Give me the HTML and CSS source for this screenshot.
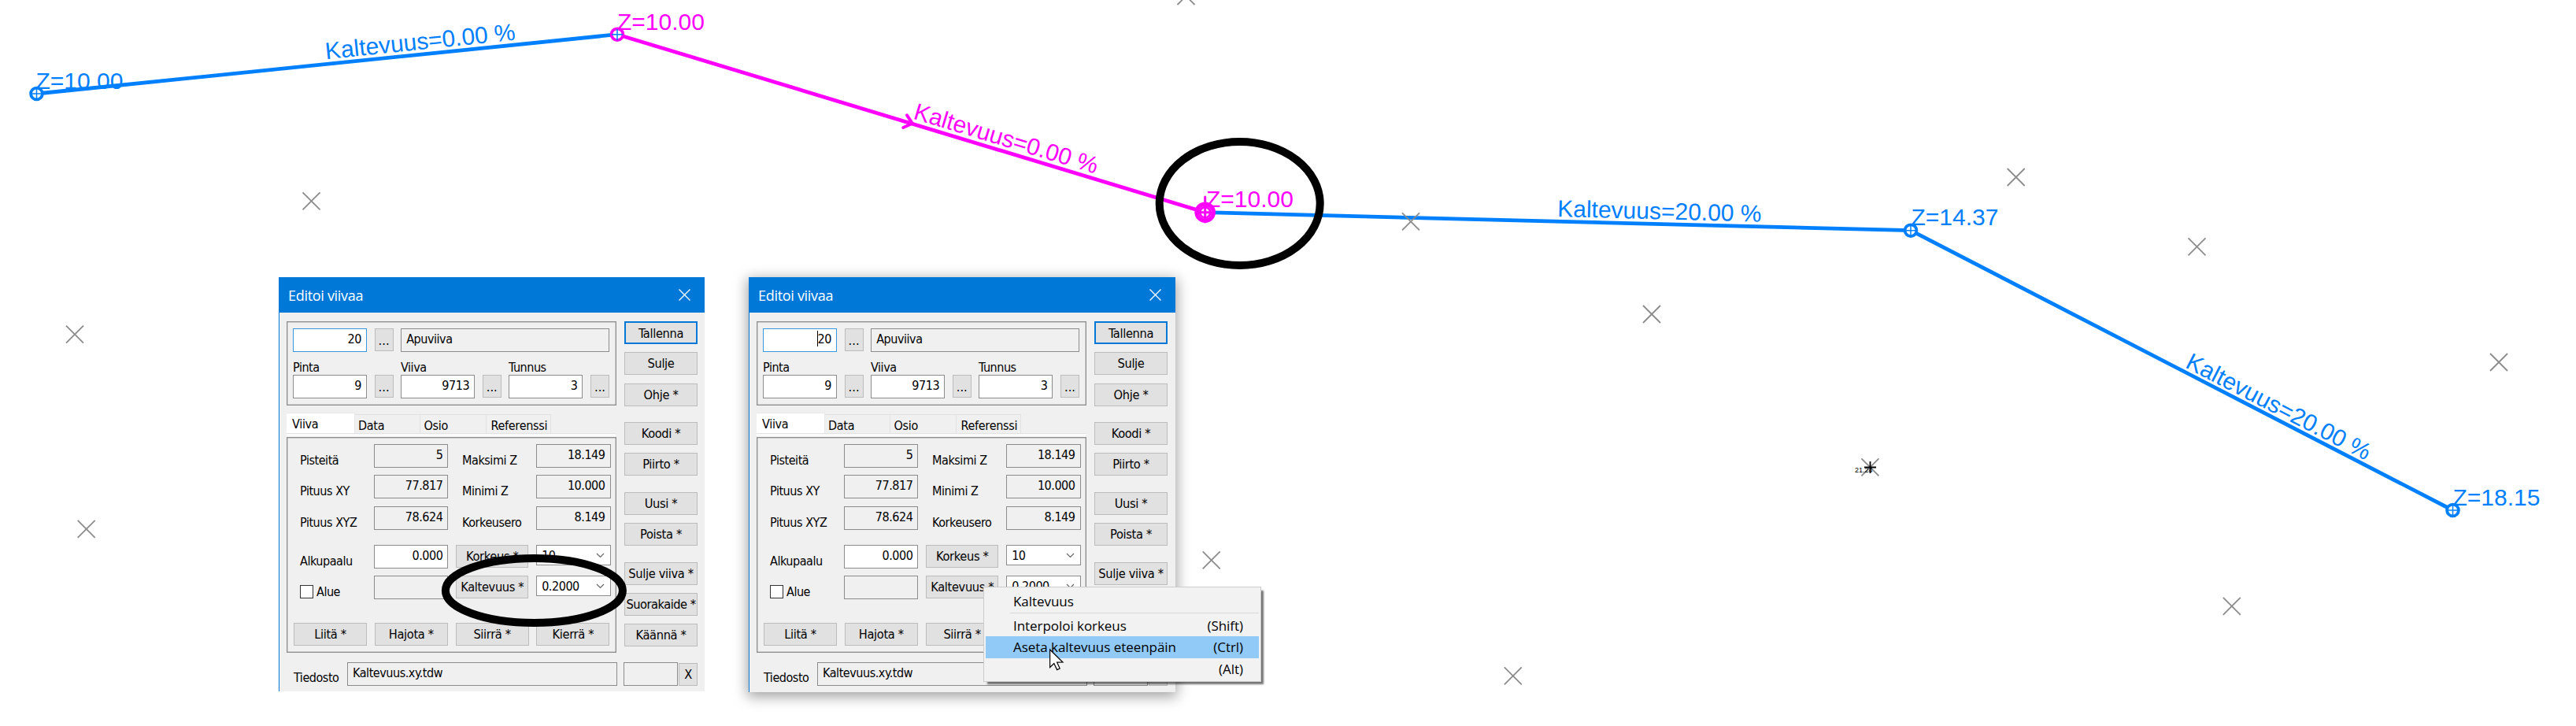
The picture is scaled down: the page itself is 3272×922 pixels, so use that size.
FILE: index.html
```html
<!DOCTYPE html>
<html lang="fi">
<head>
<meta charset="utf-8">
<title>Editoi viivaa</title>
<link rel="stylesheet" href="styles.css">
</head>
<body>
<main class="canvas">
  <svg class="drawing" width="3272" height="922" viewBox="0 0 3272 922">
    <defs>
      <path id="mark" d="M-11 -11L11 11M-11 11L11 -11"/>
    </defs>
    <g class="marks">
      <use href="#mark" x="395.5" y="255.3"/>
      <use href="#mark" x="95" y="424.7"/>
      <use href="#mark" x="109.7" y="671.8"/>
      <use href="#mark" x="1506.5" y="-5"/>
      <use href="#mark" x="1538.7" y="711.3"/>
      <use href="#mark" x="1921.8" y="858.3"/>
      <use href="#mark" x="2098" y="399"/>
      <use href="#mark" x="2560.7" y="225"/>
      <use href="#mark" x="2375.4" y="593.3"/>
      <use href="#mark" x="2790.5" y="313.3"/>
      <use href="#mark" x="3174" y="460"/>
      <use href="#mark" x="2834.8" y="769.8"/>
    </g>
    <text class="tiny" x="2356" y="600">21.24</text>
    <path class="cross" d="M2368 593.5H2383M2375.5 586V601"/>
    <path class="line" d="M46.5 119L784 43.7M1530.7 269.7L2427 292.7L3115.5 648"/>
    <use class="mark" href="#mark" x="1792" y="281.3"/>
    <path class="line selected" d="M784 43.7L1530.7 269.7"/>
    <path class="arrow" d="M1152 146.3L1158.8 156.7L1147.3 162"/>
    <g class="node">
      <circle cx="46.5" cy="119" r="7.4"/>
      <circle cx="2427" cy="292.7" r="7.4"/>
      <circle cx="3115.5" cy="648" r="7.4"/>
      <circle class="picked" cx="784" cy="43.7" r="7.4"/>
    </g>
    <path class="hair" d="M39 119H54M46.5 112V126M777 43.7H791M784 37V51M2420 292.7H2434M2427 286V300M3109 648H3122M3115.5 641V655"/>
    <circle class="active" cx="1530.7" cy="269.7" r="10.6"/>
    <circle class="active inner" cx="1530.7" cy="269.7" r="6.6"/>
    <path class="active hairs" d="M1530.7 250V282M1519 269.7H1542"/>
    <g class="label">
      <text x="45.5" y="113.3">Z=10.00</text>
      <text x="2427.5" y="286">Z=14.37</text>
      <text x="3115.5" y="642">Z=18.15</text>
      <text transform="translate(414 75.2) rotate(-5.83)">Kaltevuus=0.00 %</text>
      <text transform="translate(1978 275) rotate(1.47)">Kaltevuus=20.00 %</text>
      <text transform="translate(2774.5 466) rotate(27.3)">Kaltevuus=20.00 %</text>
    </g>
    <g class="label picked">
      <text x="784" y="37.7">Z=10.00</text>
      <text x="1532" y="262.7">Z=10.00</text>
      <text transform="translate(1159 150.5) rotate(16.84)">Kaltevuus=0.00 %</text>
    </g>
    <ellipse class="ring" cx="1574.7" cy="258.5" rx="102" ry="78.5"/>
  </svg>

  <section class="dialog first">
    <header class="titlebar"><span>Editoi viivaa</span><svg width="15" height="15" viewBox="0 0 15 15"><path d="M.5 .5L14.5 14.5M14.5 .5L.5 14.5"/></svg></header>
    <div class="content">
      <div class="left">
        <div class="group head">
          <div class="headgrid">
            <span class="field edit focus">20</span><span class="btn dots">...</span><span class="field wide">Apuviiva</span>
          </div>
          <div class="caps"><span>Pinta</span><span>Viiva</span><span>Tunnus</span></div>
          <div class="headgrid">
            <span class="field edit">9</span><span class="btn dots">...</span><span class="field edit">9713</span><span class="btn dots">...</span><span class="field edit">3</span><span class="btn dots">...</span>
          </div>
        </div>
        <div class="tabs"><span class="on">Viiva</span><span>Data</span><span>Osio</span><span>Referenssi</span></div>
        <div class="group panel">
          <div class="row"><span class="lab">Pisteitä</span><span class="field num">5</span><span class="lab">Maksimi Z</span><span class="field num">18.149</span></div>
          <div class="row"><span class="lab">Pituus XY</span><span class="field num">77.817</span><span class="lab">Minimi Z</span><span class="field num">10.000</span></div>
          <div class="row"><span class="lab">Pituus XYZ</span><span class="field num">78.624</span><span class="lab">Korkeusero</span><span class="field num">8.149</span></div>
          <div class="row gap"><span class="lab">Alkupaalu</span><span class="field edit">0.000</span><span class="btn">Korkeus *</span><span class="field combo">10<svg width="11" height="7" viewBox="0 0 11 7"><path d="M1 1L5.5 5.5L10 1"/></svg></span></div>
          <div class="row"><span class="lab check"><i></i>Alue</span><span class="field"></span><span class="btn">Kaltevuus *</span><span class="field combo">0.2000<svg width="11" height="7" viewBox="0 0 11 7"><path d="M1 1L5.5 5.5L10 1"/></svg></span></div>
          <div class="actions"><span class="btn">Liitä *</span><span class="btn">Hajota *</span><span class="btn">Siirrä *</span><span class="btn">Kierrä *</span></div>
        </div>
      </div>
      <div class="side">
        <span class="btn default">Tallenna</span><span class="btn">Sulje</span><span class="btn">Ohje *</span>
        <span class="btn apart">Koodi *</span><span class="btn">Piirto *</span>
        <span class="btn apart">Uusi *</span><span class="btn">Poista *</span>
        <span class="btn apart">Sulje viiva *</span><span class="btn tight">Suorakaide *</span><span class="btn">Käännä *</span>
      </div>
    </div>
    <footer class="file"><span class="lab">Tiedosto</span><span class="field path">Kaltevuus.xy.tdw</span><span class="field short"></span><span class="btn">X</span></footer>
  </section>

  <section class="dialog second">
    <header class="titlebar"><span>Editoi viivaa</span><svg width="15" height="15" viewBox="0 0 15 15"><path d="M.5 .5L14.5 14.5M14.5 .5L.5 14.5"/></svg></header>
    <div class="content">
      <div class="left">
        <div class="group head">
          <div class="headgrid">
            <span class="field edit focus"><b class="caret"></b>20</span><span class="btn dots">...</span><span class="field wide">Apuviiva</span>
          </div>
          <div class="caps"><span>Pinta</span><span>Viiva</span><span>Tunnus</span></div>
          <div class="headgrid">
            <span class="field edit">9</span><span class="btn dots">...</span><span class="field edit">9713</span><span class="btn dots">...</span><span class="field edit">3</span><span class="btn dots">...</span>
          </div>
        </div>
        <div class="tabs"><span class="on">Viiva</span><span>Data</span><span>Osio</span><span>Referenssi</span></div>
        <div class="group panel">
          <div class="row"><span class="lab">Pisteitä</span><span class="field num">5</span><span class="lab">Maksimi Z</span><span class="field num">18.149</span></div>
          <div class="row"><span class="lab">Pituus XY</span><span class="field num">77.817</span><span class="lab">Minimi Z</span><span class="field num">10.000</span></div>
          <div class="row"><span class="lab">Pituus XYZ</span><span class="field num">78.624</span><span class="lab">Korkeusero</span><span class="field num">8.149</span></div>
          <div class="row gap"><span class="lab">Alkupaalu</span><span class="field edit">0.000</span><span class="btn">Korkeus *</span><span class="field combo">10<svg width="11" height="7" viewBox="0 0 11 7"><path d="M1 1L5.5 5.5L10 1"/></svg></span></div>
          <div class="row"><span class="lab check"><i></i>Alue</span><span class="field"></span><span class="btn">Kaltevuus *</span><span class="field combo">0.2000<svg width="11" height="7" viewBox="0 0 11 7"><path d="M1 1L5.5 5.5L10 1"/></svg></span></div>
          <div class="actions"><span class="btn">Liitä *</span><span class="btn">Hajota *</span><span class="btn">Siirrä *</span><span class="btn"></span></div>
        </div>
      </div>
      <div class="side">
        <span class="btn default">Tallenna</span><span class="btn">Sulje</span><span class="btn">Ohje *</span>
        <span class="btn apart">Koodi *</span><span class="btn">Piirto *</span>
        <span class="btn apart">Uusi *</span><span class="btn">Poista *</span>
        <span class="btn apart">Sulje viiva *</span><span class="btn"></span><span class="btn"></span>
      </div>
    </div>
    <footer class="file"><span class="lab">Tiedosto</span><span class="field path">Kaltevuus.xy.tdw</span><span class="field short"></span><span class="btn"></span></footer>
  </section>

  <nav class="menu">
    <div class="item">Kaltevuus</div>
    <hr>
    <div class="item"><span>Interpoloi korkeus</span><span>(Shift)</span></div>
    <div class="item hot"><span>Aseta kaltevuus eteenpäin</span><span>(Ctrl)</span></div>
    <div class="item"><span></span><span>(Alt)</span></div>
  </nav>

  <svg class="overlay" width="3272" height="922" viewBox="0 0 3272 922">
    <ellipse class="ring" cx="678.4" cy="750" rx="112.5" ry="41"/>
    <path class="cursor" d="M1333.6 825V847.5L1338.8 842.6L1342.6 850.6L1346.2 849L1342.6 841.2L1350 841Z"/>
  </svg>
</main>
</body>
</html>
```
FILE: styles.css
```css
* { box-sizing: border-box; }
body { margin: 0; background: #fff; overflow: hidden; }
.canvas { position: relative; width: 3272px; height: 922px; background: #fff; overflow: hidden; }
.drawing, .overlay { position: absolute; left: 0; top: 0; }

.marks, .mark { stroke: #8c8c8c; stroke-width: 1.8; fill: none; }
.cross { stroke: #000; stroke-width: 1.8; }
.tiny { font: 9px "Liberation Sans", Arial, sans-serif; fill: #000; }
.line { fill: none; stroke: #0080ff; stroke-width: 4.8; }
.line.selected { stroke: #f0f; }
.arrow { fill: none; stroke: #f0f; stroke-width: 4; stroke-linecap: round; }
.node circle { fill: #fff; stroke: #0080ff; stroke-width: 3.8; }
.node .picked { stroke: #f0f; }
.hair { stroke: #0080ff; stroke-width: 1.5; }
.active { fill: #fff; stroke: #f0f; stroke-width: 5.4; }
.active.inner { stroke-width: 2.8; }
.active.hairs { stroke-width: 3; stroke-linecap: round; }
.label { font: 30px "Liberation Sans", Arial, sans-serif; fill: #0080ff; }
.label.picked { fill: #f0f; }
.ring { fill: none; stroke: #000; stroke-width: 10; }
.cursor { fill: #fff; stroke: #000; stroke-width: 1.2; }

.dialog {
  position: absolute; top: 352px; display: flex; flex-direction: column;
  background: #f0f0f0; border-left: 1px solid #0078d7; color: #000;
  font: 16px/20px "DejaVu Sans Condensed", "DejaVu Sans", sans-serif; font-stretch: condensed; letter-spacing: -0.45px;
}
.first { left: 354px; width: 541px; height: 526px; }
.second { left: 951px; width: 542px; height: 527px; box-shadow: 0 4px 16px 2px rgba(0, 0, 0, .36); }
.titlebar {
  display: flex; justify-content: space-between; align-items: center; height: 45px; flex: none;
  padding: 0 18px 0 11px; background: #0078d7; color: #fff; letter-spacing: -0.3px;
  font: 18px/24px "Open Sans", "Noto Sans", sans-serif;
}
.titlebar span { padding-top: 1px; }
.titlebar svg path { stroke: #fff; stroke-width: 1.3; }
.content { display: flex; gap: 10px; padding: 11px 0 0 9px; height: 433px; flex: none; }
.left { width: 419px; }
.group { border: 1px solid #8f8f8f; box-shadow: inset 0 0 0 .5px #a8a8a8; }
.head { height: 107px; padding: 8px 7px 0; }
.headgrid { display: grid; grid-template-columns: 94px 24px 94px 24px 94px 24px; column-gap: 9.6px; }
.wide { grid-column: 3 / span 4; }
.caps { display: grid; grid-template-columns: 137px 137px 1fr; height: 29px; padding-top: 10px; line-height: 20px; }
.field { display: block; height: 30px; border: 1px solid #8c8c8c; background: #f0f0f0; padding: 3px 6px 0; line-height: 20px; white-space: nowrap; }
.edit, .num { text-align: right; }
.edit, .combo { background: #fff; }
.focus { border-color: #3a96dd; position: relative; }
.caret { position: absolute; right: 23px; top: 2px; width: 1px; height: 20px; background: #000; }
.btn { display: block; height: 29px; border: 1.5px solid #bcbcbc; background: #e1e1e1; text-align: center; line-height: 27px; white-space: nowrap; overflow: hidden; font-size: 16.3px; letter-spacing: -0.35px; }
.dots { line-height: 29px; letter-spacing: 0; }
.tight { letter-spacing: -0.5px; }
.default { border: 2px solid #0078d7; }
.tabs { display: flex; align-items: flex-end; height: 40px; padding-bottom: 4px; margin-right: 1px; position: relative; }
.tabs::after { content: ""; position: absolute; left: 0; right: 0; bottom: 1px; height: 3px; background: #fbfbfb; border-top: 1px solid #e2e2e2; }
.tabs span { height: 25px; border: 1px solid #e2e2e2; border-left: 0; padding: 4px 0 0 4px; width: 82.5px; line-height: 20px; letter-spacing: -0.3px; }
.tabs .on { height: 27px; width: 87px; padding-left: 7px; background: #fff; border-color: #e8e8e8; }
.tabs span:nth-child(3) { width: 84px; padding-left: 5px; }
.tabs span:nth-child(4) { padding-left: 6px; }
.panel { height: 274px; padding: 8px 7px 0 8px; }
.row { display: grid; column-gap: 9.7px; grid-template-columns: 92.3px 94.4px 92.4px 94.4px; height: 30px; margin-bottom: 9.3px; }
.row.gap { margin-top: 19px; }
.row .lab { padding: 11px 0 0 8px; white-space: nowrap; }
.row .combo { height: 26px; display: flex; justify-content: space-between; padding-right: 7px; }
.combo svg { margin-top: 6px; }
.combo path { fill: none; stroke: #666; stroke-width: 1.2; }
.check { display: flex; gap: 4px; }
.check i { width: 17px; height: 17px; margin-top: 1px; border: 1.5px solid #333; background: #fff; }
.actions { display: grid; grid-template-columns: repeat(4, 93px); column-gap: 9.8px; margin-top: 30px; }
.side { width: 93px; display: flex; flex-direction: column; gap: 10.3px; }
.side .btn { flex: none; }
.side .apart { margin-top: 10.2px; }
.file { display: flex; align-items: flex-start; padding-left: 18px; margin-top: 11px; }
.file .lab { width: 68px; padding-top: 10px; }
.file .path { width: 343px; margin-right: 8px; }
.file .short { width: 69px; margin-right: 1px; }
.file .btn { width: 24px; margin-top: 1px; }

.menu {
  position: absolute; left: 1249px; top: 745px; width: 353px; height: 121px; padding: 4px 2px 0;
  background: #f2f2f2; border: 1px solid #ccc; box-shadow: 4px 4px 2px -1px rgba(0, 0, 0, .55);
  font: 17px/28px "Open Sans", "Noto Sans", sans-serif; color: #000; letter-spacing: -0.05px;
}
.menu .item { display: flex; justify-content: space-between; height: 27.6px; line-height: 27px; padding: 0 20px 0 35px; }
.menu .hot { background: #91c9f7; }
.menu hr { margin: 0 0 2px 31px; border: 0; border-top: 1px solid #d8d8d8; height: 1px; }
```
